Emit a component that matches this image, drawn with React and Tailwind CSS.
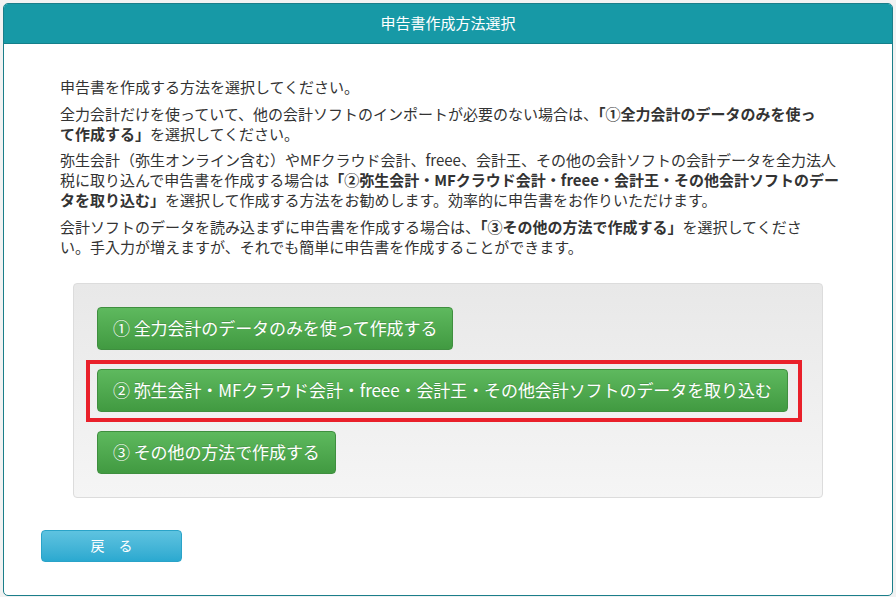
export default function App() {
  const greenBtn =
    'flex w-fit items-center h-[43px] px-[15px] rounded-[4px] border border-[#3f8f3f] bg-gradient-to-b from-[#5eb95e] to-[#419a41] text-white text-[17px] tracking-[-0.08px] [text-shadow:0_-1px_0_rgba(0,0,0,0.15)]';

  return (
    <div
      className="min-h-screen bg-[#f2f2f2] p-[3px]"
      style={{ fontFamily: '"Noto Sans CJK JP", "Liberation Sans", sans-serif' }}
    >
      <div className="h-[593px] rounded-[5px] border border-[#1b7e8a] bg-white overflow-hidden">
        {/* Header */}
        <div className="h-[40px] bg-[#1799a6] border-b border-[#147f8a] flex items-center justify-center text-white text-[15px]">
          申告書作成方法選択
        </div>

        {/* Description */}
        <div className="pl-[56px] pr-[30px] pt-[33px] text-[15px] leading-[20px] text-[#333]">
          <p className="mb-[6.5px]">申告書を作成する方法を選択してください。</p>
          <p className="mb-[6.5px]">
            全力会計だけを使っていて、他の会計ソフトのインポートが必要のない場合は、
            <b>「①全力会計のデータのみを使っ
              <br />
              て作成する」</b>
            を選択してください。
          </p>
          <p className="mb-[6.5px]">
            弥生会計（弥生オンライン含む）やMFクラウド会計、freee、会計王、その他の会計ソフトの会計データを全力法人
            <br />
            税に取り込んで申告書を作成する場合は
            <b>「②弥生会計・MFクラウド会計・freee・会計王・その他会計ソフトのデー
              <br />
              タを取り込む」</b>
            を選択して作成する方法をお勧めします。効率的に申告書をお作りいただけます。
          </p>
          <p>
            会計ソフトのデータを読み込まずに申告書を作成する場合は、
            <b>「③その他の方法で作成する」</b>
            を選択してくださ
            <br />
            い。手入力が増えますが、それでも簡単に申告書を作成することができます。
          </p>
        </div>

        {/* Options */}
        <div className="ml-[69px] mt-[26px] w-[750px] rounded-[4px] border border-[#dcdcdc] bg-gradient-to-b from-[#e8e8e8] to-[#f5f5f5] p-[23px] flex flex-col gap-[19px]">
          <button className={greenBtn}>① 全力会計のデータのみを使って作成する</button>
          <div className="relative w-fit">
            <button className={greenBtn}>
              ② 弥生会計・MFクラウド会計・freee・会計王・その他会計ソフトのデータを取り込む
            </button>
            <div className="absolute -left-[11px] -right-[14px] -top-[9px] -bottom-[10px] border-4 border-[#e9202a] pointer-events-none" />
          </div>
          <button className={greenBtn}>③ その他の方法で作成する</button>
        </div>

        {/* Back */}
        <button className="ml-[37px] mt-[32px] w-[141px] h-[32px] rounded-[4px] border border-[#2aa3c8] bg-gradient-to-b from-[#5ec3e0] to-[#2aa9d0] text-white text-[14px] flex items-center justify-center">
          戻　る
        </button>
      </div>
    </div>
  );
}
